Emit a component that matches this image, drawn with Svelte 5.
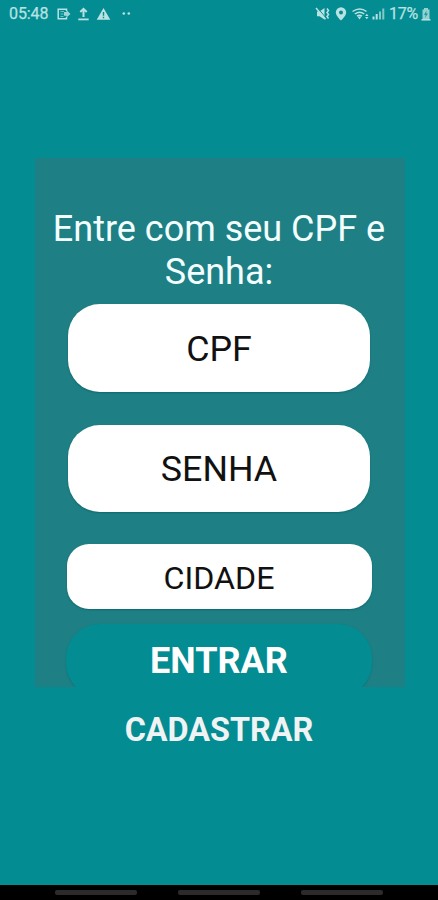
<script>
  const fields = [
    { label: 'CPF', kind: 'tall' },
    { label: 'SENHA', kind: 'tall second' },
    { label: 'CIDADE', kind: 'short' },
  ];
</script>

<div class="screen">
  <header>
    <span class="time">05:48</span>
    <svg class="left" width="78" height="16" viewBox="0 0 78 16" fill="none">
      <path d="M9.500 5V3.200H1.200v9.600h8.300V11" stroke="currentColor" stroke-width="1.500" />
      <path d="M3.500 5.500h3.500M3.500 8h3M3.500 10.500h3" stroke="currentColor" opacity=".6" />
      <path d="M7 6h2.500V4L13.500 8l-4 3.500V9.800H7z" fill="currentColor" opacity=".85" />
      <path d="M26.500 11V4M23.300 6l3.200-3.200L29.700 6" stroke="currentColor" stroke-width="2" />
      <path d="M21.300 13.400h10.400" stroke="currentColor" stroke-width="1.800" />
      <path d="M46.500 2 53.300 13.800H39.700z" fill="currentColor" />
      <path d="M46.500 6v3.700M46.500 10.800v1.400" stroke="#038c91" stroke-width="1.400" />
      <circle cx="66.800" cy="7.500" r="1.300" fill="currentColor" />
      <circle cx="71.800" cy="7.500" r="1.300" fill="currentColor" />
    </svg>
    <svg class="right" width="74" height="16" viewBox="0 0 74 16" fill="none">
      <path d="M2 5.500h2.500L9.500 2v11.500L4.500 10.300H2z" fill="currentColor" />
      <path d="M2.300 1.500 11 12" stroke="#038c91" />
      <path d="M1 2 10.500 13.300" stroke="currentColor" stroke-width="1.500" />
      <path d="M12 2.500 13.500 4.500 12 6.500 13.500 8.500 12 10.500 13.500 12.500" stroke="currentColor" stroke-width="1.500" />
      <path fill-rule="evenodd" d="M26 1.300a5.200 5.200 0 0 0-5.200 5.200C20.800 10 26 14.500 26 14.500s5.200-4.500 5.200-8A5.200 5.200 0 0 0 26 1.300zm0 3.200a2 2 0 1 1 0 4 2 2 0 0 1 0-4z" fill="currentColor" />
      <path d="M37.500 5.500q7.500-5 14 0M39.800 8q4.800-3.500 9.500 0M42 10.200q2.500-2 5 0" stroke="currentColor" stroke-width="1.500" />
      <path d="M42.500 10.500h4L44.500 13.500zM51.800 7.700l1.700 2.200h-3.400zM51.800 13.300l1.700-2.200h-3.400z" fill="currentColor" />
      <path d="M58.500 10.500v3M61.700 8v5.500" stroke="currentColor" stroke-width="2" />
      <path d="M65 5.500v8M68.300 2.500v11" stroke="currentColor" stroke-width="2" opacity=".7" />
    </svg>
    <span class="percent">17%</span>
    <svg class="battery" width="10" height="14" viewBox="0 0 10 14">
      <path d="M3 1h4v1.500h1.500V13h-7V2.500H3z" fill="currentColor" opacity=".8" />
      <path d="M5.500 3.500 3 8h1.700L4 11l3-4.500H5.200z" fill="#038c91" opacity=".8" />
      <path d="M.5 12.800h9" stroke="currentColor" stroke-width="1.500" />
    </svg>
  </header>

  <main>
    <section class="card">
      <h1>Entre com seu CPF e<br />Senha:</h1>
      {#each fields as field}
        <div class="field {field.kind}"><span>{field.label}</span></div>
      {/each}
      <button class="enter"><span>ENTRAR</span></button>
    </section>
    <button class="register">CADASTRAR</button>
  </main>

  <nav>
    <i></i><i></i><i></i>
  </nav>
</div>

<style>
  :global(body) {
    margin: 0;
    background: #038c91;
  }
  .screen {
    width: 438px;
    height: 900px;
    display: flex;
    flex-direction: column;
    overflow: hidden;
    background: #038c91;
    font-family: Roboto, sans-serif;
  }
  header {
    box-sizing: border-box;
    height: 28px;
    padding: 0 7px 0 9px;
    display: flex;
    align-items: center;
    color: #b9e2e3;
    font-size: 16px;
    line-height: 28px;
  }
  header svg {
    display: block;
    flex: none;
  }
  .time {
    width: 40px;
    letter-spacing: -0.1px;
    -webkit-text-stroke: 0.25px #b9e2e3;
  }
  .left {
    margin-left: 8px;
  }
  .right {
    margin-left: auto;
  }
  .percent {
    width: 31px;
    margin-left: 0;
    letter-spacing: -0.2px;
    -webkit-text-stroke: 0.25px #b9e2e3;
  }
  .battery {
    margin-left: 1px;
  }
  main {
    flex: 1;
    display: flex;
    flex-direction: column;
    align-items: center;
    padding-top: 130px;
  }
  .card {
    box-sizing: border-box;
    width: 370px;
    height: 529px;
    margin-left: 2px;
    padding: 50px 2px 0 0;
    display: flex;
    flex-direction: column;
    align-items: center;
    overflow: hidden;
    background: #1e8085;
  }
  h1 {
    margin: 0;
    height: 95.500px;
    flex: none;
    font-size: 36px;
    line-height: 42.500px;
    font-weight: 400;
    text-align: center;
    color: #f3ffff;
    white-space: nowrap;
  }
  .field,
  .enter {
    flex: none;
    display: flex;
    align-items: center;
    justify-content: center;
    box-shadow: 0 1px 2px #00505a80;
  }
  .field {
    background: #fff;
    color: #111;
  }
  .field span {
    padding-top: 2px;
  }
  .tall {
    width: 302px;
    height: 88px;
    border-radius: 32px;
    font-size: 35.800px;
    margin-bottom: 33px;
  }
  .second {
    height: 87.500px;
    margin-bottom: 32px;
  }
  .short {
    width: 305px;
    height: 65px;
    border-radius: 22px;
    font-size: 32.200px;
  }
  button {
    border: 0;
    padding: 0;
    background: #038c91;
    font-family: inherit;
    font-weight: 700;
  }
  .enter {
    width: 306px;
    height: 73px;
    margin-top: 15px;
    border-radius: 34px;
    color: #fff;
    font-size: 36px;
    box-shadow: 0 1px 2px #00505a55;
  }
  .enter span {
    padding-top: 1px;
  }
  .register {
    height: 50px;
    margin-top: 18px;
    color: #f0f3f3;
    font-size: 32.400px;
    line-height: 50px;
  }
  nav {
    box-sizing: border-box;
    height: 15.500px;
    display: flex;
    justify-content: center;
    gap: 41px;
    padding-top: 5.500px;
    background: #000;
  }
  nav i {
    width: 82px;
    height: 5px;
    border-radius: 2px;
    background: #2c2a2b;
  }
</style>
